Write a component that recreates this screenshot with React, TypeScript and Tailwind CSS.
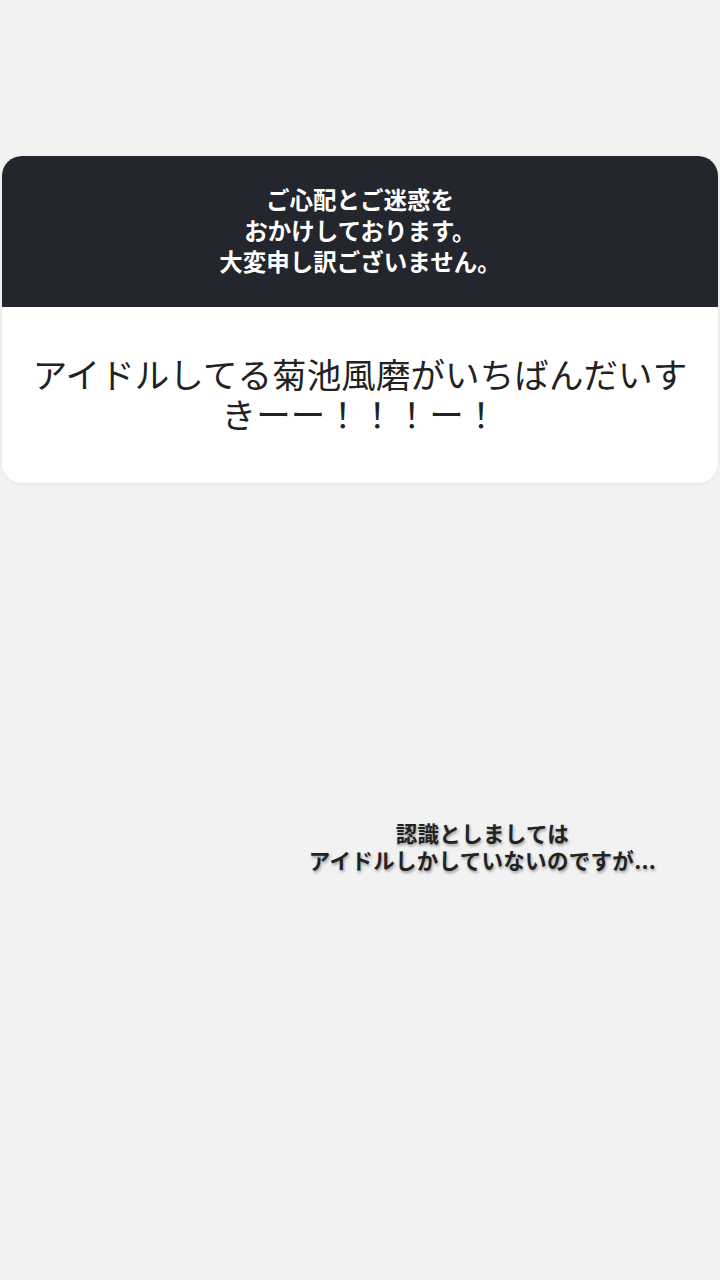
import React from "react";

export default function App() {
  const font = { fontFamily: '"Noto Sans CJK JP", "Noto Sans", sans-serif' };
  return (
    <div className="w-[720px] h-[1280px] bg-[#f2f2f2] flex flex-col" style={font}>
      <div className="h-[156px]" />
      <div className="mx-[2px] rounded-[20px] overflow-hidden bg-white shadow-[0_1px_3px_rgba(0,0,0,0.06)]">
        <div className="bg-[#23262d] h-[151px] flex flex-col items-center justify-center pb-[2px]">
          <p className="text-white font-bold text-[23.5px] leading-[31px] text-center">
            ご心配とご迷惑を
            <br />
            おかけしております。
            <br />
            大変申し訳ございません。
          </p>
        </div>
        <div className="h-[176px] flex items-center justify-center px-[16px] pb-[4px]">
          <p className="text-[#222] text-[34.5px] leading-[40px] text-center tracking-[0.1px]">
            アイドルしてる菊池風磨がいちばんだいすきーー！！！ー！
          </p>
        </div>
      </div>
      <div className="h-[336px]" />
      <div className="flex justify-end pr-[64px]">
        <p className="text-[#222] font-bold text-[21.5px] leading-[27px] text-center tracking-[0.3px] [text-shadow:1px_2px_3px_rgba(0,0,0,0.35)]">
          認識としましては
          <br />
          アイドルしかしていないのですが...
        </p>
      </div>
    </div>
  );
}
